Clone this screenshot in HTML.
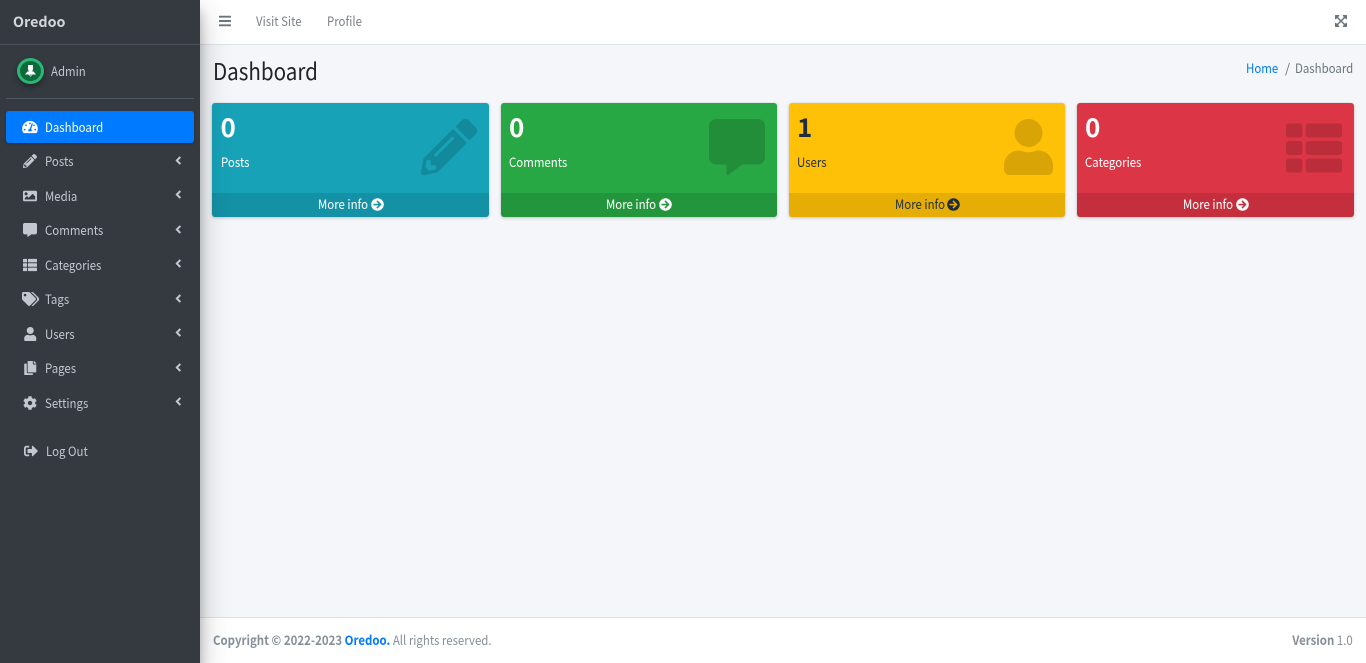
<!DOCTYPE html>
<html lang="en">
<head>
<meta charset="utf-8">
<title>Dashboard</title>
<style>
*{box-sizing:border-box}
html,body{margin:0;padding:0;width:1366px;height:663px;overflow:hidden;background:#f4f6f9}
body{position:relative;font-family:"Noto Sans CJK SC","Liberation Sans",sans-serif;font-size:13px;color:#212529}
a{text-decoration:none;color:inherit}
.t{position:absolute;line-height:20px;height:20px;white-space:nowrap}
.a{position:absolute}
svg{display:block;fill:currentColor}
#side{position:absolute;left:0;top:0;width:200px;height:663px;background:#343a40;color:#c2c7d0;box-shadow:0 14px 28px rgba(0,0,0,.25),0 10px 10px rgba(0,0,0,.22);z-index:5}
#nav{position:absolute;left:200px;top:0;width:1166px;height:45px;background:#fff;border-bottom:1px solid #dee2e6}
#foot{position:absolute;left:200px;top:617px;width:1166px;height:46px;background:#fff;border-top:1px solid #dee2e6;color:#869099}
.card{position:absolute;top:103px;height:114px;border-radius:3px;box-shadow:0 0 1px rgba(0,0,0,.125),0 1px 3px rgba(0,0,0,.2);overflow:hidden;color:#fff}
.card .num{position:absolute;left:8.5px;top:8px;font-size:26px;font-weight:700;line-height:32px}
.card .lab{position:absolute;left:8.5px;top:49px;line-height:20px;transform:scaleX(.88);transform-origin:0 50%;white-space:nowrap}
.card .big{position:absolute;color:rgba(0,0,0,.15)}
.card .more{position:absolute;left:0;right:0;bottom:0;height:24px;background:rgba(0,0,0,.1)}
.card .mt{position:absolute;top:1px;line-height:20px;transform:scaleX(.88);transform-origin:0 50%;white-space:nowrap}
.card .more svg{position:absolute;top:5px;width:13px;height:13px}
.s{transform:scaleX(.88);transform-origin:0 50%}
.r{transform:scaleX(.88);transform-origin:100% 50%}
</style>
</head>
<body>

<svg width="0" height="0" style="position:absolute">
<defs>
<symbol id="i-tach" viewBox="0 0 576 512"><path d="M288 32C128.94 32 0 160.94 0 320c0 52.8 14.25 102.26 39.06 144.8 5.61 9.62 16.3 15.2 27.44 15.2h443c11.14 0 21.83-5.58 27.44-15.2C561.75 422.26 576 372.8 576 320c0-159.06-128.94-288-288-288zm0 64c14.71 0 26.58 10.13 30.32 23.65-1.11 2.26-2.64 4.23-3.45 6.67l-9.22 27.67c-5.13 3.49-10.97 6.01-17.64 6.01-17.67 0-32-14.33-32-32S270.33 96 288 96zM96 384c-17.67 0-32-14.33-32-32s14.33-32 32-32 32 14.33 32 32-14.33 32-32 32zm48-160c-17.67 0-32-14.33-32-32s14.33-32 32-32 32 14.33 32 32-14.33 32-32 32zm246.77-72.41l-61.33 184C343.13 347.33 352 364.54 352 384c0 11.72-3.38 22.55-8.88 32H232.88c-5.5-9.45-8.88-20.28-8.88-32 0-33.94 26.5-61.43 59.9-63.59l61.34-184.01c4.17-12.56 17.73-19.45 30.36-15.17 12.57 4.19 19.35 17.79 15.17 30.36zm14.66 57.2l15.52-46.55c3.47-1.29 7.13-2.23 11.05-2.23 17.67 0 32 14.33 32 32s-14.33 32-32 32c-11.38-.01-20.89-6.28-26.57-15.22zM480 384c-17.67 0-32-14.33-32-32s14.33-32 32-32 32 14.33 32 32-14.33 32-32 32z"/></symbol>
<symbol id="i-pen" viewBox="0 0 512 512"><path d="M497.9 142.1l-46.1 46.1c-4.7 4.7-12.3 4.7-17 0l-111-111c-4.7-4.7-4.7-12.3 0-17l46.1-46.1c18.7-18.7 49.1-18.7 67.9 0l60.1 60.1c18.8 18.7 18.8 49.1 0 67.9zM284.2 99.8L21.6 362.4.4 483.9c-2.9 16.4 11.4 30.6 27.8 27.8l121.5-21.3 262.6-262.6c4.7-4.7 4.7-12.3 0-17l-111-111c-4.8-4.7-12.4-4.7-17.1 0zM124.1 339.9c-5.5-5.5-5.5-14.3 0-19.8l154-154c5.5-5.5 14.3-5.5 19.8 0s5.5 14.3 0 19.8l-154 154c-5.5 5.5-14.3 5.5-19.8 0zM88 424h48v36.3l-64.5 11.3-31.1-31.1L51.7 376H88v48z"/></symbol>
<symbol id="i-img" viewBox="0 0 512 512"><path d="M464 448H48c-26.51 0-48-21.49-48-48V112c0-26.51 21.49-48 48-48h416c26.51 0 48 21.49 48 48v288c0 26.51-21.49 48-48 48zM112 120c-30.928 0-56 25.072-56 56s25.072 56 56 56 56-25.072 56-56-25.072-56-56-56zM64 384h384V272l-87.515-87.515c-4.686-4.686-12.284-4.686-16.971 0L208 320l-55.515-55.515c-4.686-4.686-12.284-4.686-16.971 0L64 336v48z"/></symbol>
<symbol id="i-com" viewBox="0 0 512 512"><path d="M448 0H64C28.7 0 0 28.7 0 64v288c0 35.3 28.7 64 64 64h96v84c0 9.8 11.2 15.5 19.1 9.7L304 416h144c35.3 0 64-28.7 64-64V64c0-35.3-28.7-64-64-64z"/></symbol>
<symbol id="i-list" viewBox="0 0 512 512"><path d="M149.333 216v80c0 13.255-10.745 24-24 24H24c-13.255 0-24-10.745-24-24v-80c0-13.255 10.745-24 24-24h101.333c13.255 0 24 10.745 24 24zM0 376v80c0 13.255 10.745 24 24 24h101.333c13.255 0 24-10.745 24-24v-80c0-13.255-10.745-24-24-24H24c-13.255 0-24 10.745-24 24zM125.333 32H24C10.745 32 0 42.745 0 56v80c0 13.255 10.745 24 24 24h101.333c13.255 0 24-10.745 24-24V56c0-13.255-10.745-24-24-24zm80 448H488c13.255 0 24-10.745 24-24v-80c0-13.255-10.745-24-24-24H205.333c-13.255 0-24 10.745-24 24v80c0 13.255 10.745 24 24 24zm-24-424v80c0 13.255 10.745 24 24 24H488c13.255 0 24-10.745 24-24V56c0-13.255-10.745-24-24-24H205.333c-13.255 0-24 10.745-24 24zm24 264H488c13.255 0 24-10.745 24-24v-80c0-13.255-10.745-24-24-24H205.333c-13.255 0-24 10.745-24 24v80c0 13.255 10.745 24 24 24z"/></symbol>
<symbol id="i-tags" viewBox="0 0 640 512"><path d="M497.941 225.941L286.059 14.059A48 48 0 0 0 252.118 0H48C21.49 0 0 21.49 0 48v204.118a48 48 0 0 0 14.059 33.941l211.882 211.882c18.744 18.745 49.136 18.746 67.882 0l204.118-204.118c18.745-18.745 18.745-49.137 0-67.882zM112 160c-26.51 0-48-21.49-48-48s21.49-48 48-48 48 21.49 48 48-21.49 48-48 48zm513.941 133.823L421.823 497.941c-18.745 18.745-49.137 18.745-67.882 0l-.36-.36L527.64 323.522c16.999-16.999 26.36-39.6 26.36-63.64s-9.362-46.641-26.36-63.64L331.397 0h48.721a48 48 0 0 1 33.941 14.059l211.882 211.882c18.745 18.745 18.745 49.137 0 67.882z"/></symbol>
<symbol id="i-user" viewBox="0 0 448 512"><path d="M224 256c70.7 0 128-57.3 128-128S294.7 0 224 0 96 57.3 96 128s57.3 128 128 128zm89.6 32h-16.7c-22.2 10.2-46.9 16-72.9 16s-50.6-5.8-72.9-16h-16.7C60.2 288 0 348.2 0 422.4V464c0 26.5 21.5 48 48 48h352c26.5 0 48-21.5 48-48v-41.6c0-74.2-60.2-134.4-134.4-134.4z"/></symbol>
<symbol id="i-copy" viewBox="0 0 448 512"><path d="M320 448v40c0 13.255-10.745 24-24 24H24c-13.255 0-24-10.745-24-24V120c0-13.255 10.745-24 24-24h72v296c0 30.879 25.121 56 56 56h168zm0-344V0H152c-13.255 0-24 10.745-24 24v368c0 13.255 10.745 24 24 24h272c13.255 0 24-10.745 24-24V128H344c-13.2 0-24-10.8-24-24zm120.971-31.029L375.029 7.029A24 24 0 0 0 358.059 0H352v96h96v-6.059a24 24 0 0 0-7.029-16.97z"/></symbol>
<symbol id="i-cog" viewBox="0 0 512 512"><path d="M487.4 315.7l-42.6-24.6c4.3-23.2 4.3-47 0-70.2l42.6-24.6c4.9-2.8 7.1-8.6 5.5-14-11.1-35.6-30-67.8-54.7-94.6-3.8-4.1-10-5.1-14.8-2.3L380.8 110c-17.9-15.4-38.5-27.3-60.8-35.1V25.8c0-5.6-3.9-10.5-9.4-11.7-36.7-8.2-74.3-7.8-109.2 0-5.5 1.2-9.4 6.1-9.4 11.7V75c-22.2 7.9-42.8 19.8-60.8 35.1L88.7 85.5c-4.9-2.8-11-1.9-14.8 2.3-24.7 26.7-43.6 58.9-54.7 94.6-1.7 5.4.6 11.2 5.5 14L67.3 221c-4.3 23.2-4.3 47 0 70.2l-42.6 24.6c-4.9 2.8-7.1 8.6-5.5 14 11.1 35.6 30 67.8 54.7 94.6 3.8 4.1 10 5.1 14.8 2.3l42.6-24.6c17.9 15.4 38.5 27.3 60.8 35.1v49.2c0 5.6 3.9 10.5 9.4 11.7 36.7 8.2 74.3 7.8 109.2 0 5.5-1.2 9.4-6.1 9.4-11.7v-49.2c22.2-7.9 42.8-19.8 60.8-35.1l42.6 24.6c4.9 2.8 11 1.9 14.8-2.3 24.7-26.7 43.6-58.9 54.7-94.6 1.5-5.5-.7-11.3-5.6-14.1zM256 336c-44.1 0-80-35.9-80-80s35.9-80 80-80 80 35.9 80 80-35.9 80-80 80z"/></symbol>
<symbol id="i-out" viewBox="0 0 512 512"><path d="M497 273L329 441c-15 15-41 4.5-41-17v-96H152c-13.3 0-24-10.7-24-24v-96c0-13.3 10.7-24 24-24h136V88c0-21.4 25.9-32 41-17l168 168c9.3 9.4 9.3 24.6 0 34zM192 436v-40c0-6.6-5.4-12-12-12H96c-17.7 0-32-14.3-32-32V160c0-17.7 14.3-32 32-32h84c6.6 0 12-5.4 12-12V76c0-6.6-5.4-12-12-12H96c-53 0-96 43-96 96v192c0 53 43 96 96 96h84c6.6 0 12-5.4 12-12z"/></symbol>
<symbol id="i-left" viewBox="0 0 256 512"><path d="M31.7 239l136-136c9.4-9.4 24.6-9.4 33.9 0l22.6 22.6c9.4 9.4 9.4 24.6 0 33.9L127.9 256l96.4 96.4c9.4 9.4 9.4 24.6 0 33.9L201.7 409c-9.4 9.4-24.6 9.4-33.9 0l-136-136c-9.5-9.4-9.5-24.6-.1-34z"/></symbol>
<symbol id="i-arrow" viewBox="0 0 512 512"><path d="M256 8c137 0 248 111 248 248S393 504 256 504 8 393 8 256 119 8 256 8zm-28.9 143.6l75.5 72.4H120c-13.3 0-24 10.7-24 24v16c0 13.3 10.7 24 24 24h182.6l-75.5 72.4c-9.7 9.3-9.9 24.8-.4 34.3l11 10.9c9.4 9.4 24.6 9.4 33.9 0L404.3 273c9.4-9.4 9.4-24.6 0-33.9L271.6 106.3c-9.4-9.4-24.6-9.4-33.9 0l-11 10.9c-9.5 9.6-9.3 25.1.4 34.4z"/></symbol>
<symbol id="i-bars" viewBox="0 0 448 512"><path d="M16 132h416c8.837 0 16-7.163 16-16V76c0-8.837-7.163-16-16-16H16C7.163 60 0 67.163 0 76v40c0 8.837 7.163 16 16 16zm0 160h416c8.837 0 16-7.163 16-16v-40c0-8.837-7.163-16-16-16H16c-8.837 0-16 7.163-16 16v40c0 8.837 7.163 16 16 16zm0 160h416c8.837 0 16-7.163 16-16v-40c0-8.837-7.163-16-16-16H16c-8.837 0-16 7.163-16 16v40c0 8.837 7.163 16 16 16z"/></symbol>
<symbol id="i-exp" viewBox="0 0 448 512"><path d="M448 344v112a23.94 23.94 0 0 1-24 24H312c-21.39 0-32.09-25.9-17-41l36.2-36.2L224 295.6 116.77 402.9 153 439c15.09 15.1 4.39 41-17 41H24a23.94 23.94 0 0 1-24-24V344c0-21.4 25.89-32.1 41-17l36.19 36.2L184.46 256 77.18 148.7 41 185c-15.1 15.1-41 4.4-41-17V56a23.94 23.94 0 0 1 24-24h112c21.39 0 32.09 25.9 17 41l-36.2 36.2L224 216.4l107.23-107.3L295 73c-15.09-15.1-4.39-41 17-41h112a23.94 23.94 0 0 1 24 24v112c0 21.4-25.89 32.1-41 17l-36.19-36.2L263.54 256l107.28 107.3L407 327.1c15.1-15.2 41-4.5 41 16.9z"/></symbol>
</defs>
</svg>

<div id="nav">
  <svg class="a" style="left:19px;top:14px;width:12px;height:14px;color:#6c757d" viewBox="0 0 448 512"><use href="#i-bars"/></svg>
  <a class="t s" style="left:55.5px;top:11px;color:#7b8288">Visit Site</a>
  <a class="t s" style="left:127px;top:11px;color:#7b8288">Profile</a>
  <svg class="a" style="left:1135px;top:14px;width:12px;height:14px;color:#6c757d" viewBox="0 0 448 512"><use href="#i-exp"/></svg>
</div>

<div class="t s" style="left:212.5px;top:55px;height:30px;line-height:30px;font-size:23.4px;color:#212529">Dashboard</div>
<a class="t s" style="left:1246px;top:58px;color:#007bff">Home</a>
<div class="t" style="left:1285px;top:58px;color:#6c757d">/</div>
<div class="t s" style="left:1295px;top:58px;color:#6c757d">Dashboard</div>

<div class="card" style="left:212px;width:277px;background:#17a2b8">
  <div class="num">0</div><div class="lab">Posts</div>
  <svg class="big" style="left:208.5px;top:16px;width:56px;height:56px" viewBox="0 0 512 512"><use href="#i-pen"/></svg>
  <a class="more"><span class="mt" style="left:106px">More info</span><svg style="left:158.5px" viewBox="0 0 512 512"><use href="#i-arrow"/></svg></a>
</div>
<div class="card" style="left:501px;width:276px;background:#28a745">
  <div class="num" style="left:8px">0</div><div class="lab" style="left:8px">Comments</div>
  <svg class="big" style="left:208px;top:16px;width:56px;height:56px" viewBox="0 0 512 512"><use href="#i-com"/></svg>
  <a class="more"><span class="mt" style="left:105px">More info</span><svg style="left:158px" viewBox="0 0 512 512"><use href="#i-arrow"/></svg></a>
</div>
<div class="card" style="left:789px;width:276px;background:#ffc107;color:#1f2d3d">
  <div class="num" style="left:8px">1</div><div class="lab" style="left:8px">Users</div>
  <svg class="big" style="left:215px;top:16px;width:49px;height:56px" viewBox="0 0 448 512"><use href="#i-user"/></svg>
  <a class="more"><span class="mt" style="left:106px">More info</span><svg style="left:158px" viewBox="0 0 512 512"><use href="#i-arrow"/></svg></a>
</div>
<div class="card" style="left:1077px;width:277px;background:#dc3545">
  <div class="num" style="left:8px">0</div><div class="lab" style="left:8px">Categories</div>
  <svg class="big" style="left:208.5px;top:16.5px;width:56px;height:56px" viewBox="0 0 512 512"><use href="#i-list"/></svg>
  <a class="more"><span class="mt" style="left:106px">More info</span><svg style="left:158.5px" viewBox="0 0 512 512"><use href="#i-arrow"/></svg></a>
</div>

<div id="foot">
  <div class="t s" style="left:13px;top:12px"><b style="font-weight:700">Copyright © 2022-2023 <a style="color:#007bff">Oredoo.</a></b> All rights reserved.</div>
  <div class="t r" style="right:13px;top:12px"><b style="font-weight:700">Version</b> 1.0</div>
</div>

<div id="side">
  <div class="t" style="left:13px;top:12px;font-weight:700;font-size:14.3px;color:#d3d6da">Oredoo</div>
  <div class="a" style="left:0;top:44px;width:200px;height:1px;background:#4b545c"></div>

  <div class="a" style="left:17px;top:58px;width:27px;height:26px;border-radius:50%;background:#0e6a3c;border:3px solid #2bb673;box-shadow:0 3px 6px rgba(0,0,0,.35)"></div>
  <svg class="a" style="left:24px;top:64px;width:13px;height:14px" viewBox="0 0 13 14"><path fill="#fff" d="M4 1h5v4L8.200 7.500h1.300L12 10.500H8.500L6.500 13 4.500 10.500H1L3.500 7.500h1.300L4 5z"/><path fill="#35c27c" d="M5 10.500h3L6.500 12.800z"/></svg>
  <div class="t s" style="left:51px;top:61px;color:#c2c7d0">Admin</div>
  <div class="a" style="left:6px;top:98px;width:188px;height:1px;background:#4f5962"></div>

  <div class="a" style="left:6px;top:111px;width:188px;height:32px;background:#007bff;border-radius:3px;box-shadow:0 1px 3px rgba(0,0,0,.2)"></div>
  <svg class="a" style="left:22px;top:120px;width:16px;height:14px;color:#fff" viewBox="0 0 576 512"><use href="#i-tach"/></svg>
  <div class="t s" style="left:45px;top:117px;color:#fff">Dashboard</div>

  <svg class="a" style="left:23px;top:154px;width:14px;height:14px" viewBox="0 0 512 512"><use href="#i-pen"/></svg>
  <div class="t s" style="left:45px;top:151px">Posts</div>
  <svg class="a" style="left:174.500px;top:154px;width:6.500px;height:13px" viewBox="0 0 256 512"><use href="#i-left"/></svg>

  <svg class="a" style="left:23px;top:189px;width:14px;height:14px" viewBox="0 0 512 512"><use href="#i-img"/></svg>
  <div class="t s" style="left:45px;top:186px">Media</div>
  <svg class="a" style="left:174.500px;top:188px;width:6.500px;height:13px" viewBox="0 0 256 512"><use href="#i-left"/></svg>

  <svg class="a" style="left:23px;top:223px;width:14px;height:14px" viewBox="0 0 512 512"><use href="#i-com"/></svg>
  <div class="t s" style="left:45px;top:220px">Comments</div>
  <svg class="a" style="left:174.500px;top:223px;width:6.500px;height:13px" viewBox="0 0 256 512"><use href="#i-left"/></svg>

  <svg class="a" style="left:23px;top:258px;width:14px;height:14px" viewBox="0 0 512 512"><use href="#i-list"/></svg>
  <div class="t s" style="left:45px;top:255px">Categories</div>
  <svg class="a" style="left:174.500px;top:257px;width:6.500px;height:13px" viewBox="0 0 256 512"><use href="#i-left"/></svg>

  <svg class="a" style="left:21.500px;top:292px;width:17.500px;height:14px" viewBox="0 0 640 512"><use href="#i-tags"/></svg>
  <div class="t s" style="left:45px;top:289px">Tags</div>
  <svg class="a" style="left:174.500px;top:292px;width:6.500px;height:13px" viewBox="0 0 256 512"><use href="#i-left"/></svg>

  <svg class="a" style="left:24px;top:327px;width:12.500px;height:14px" viewBox="0 0 448 512"><use href="#i-user"/></svg>
  <div class="t s" style="left:45px;top:324px">Users</div>
  <svg class="a" style="left:174.500px;top:326px;width:6.500px;height:13px" viewBox="0 0 256 512"><use href="#i-left"/></svg>

  <svg class="a" style="left:24px;top:361px;width:12.500px;height:14px" viewBox="0 0 448 512"><use href="#i-copy"/></svg>
  <div class="t s" style="left:45px;top:358px">Pages</div>
  <svg class="a" style="left:174.500px;top:361px;width:6.500px;height:13px" viewBox="0 0 256 512"><use href="#i-left"/></svg>

  <svg class="a" style="left:23px;top:396px;width:14px;height:14px" viewBox="0 0 512 512"><use href="#i-cog"/></svg>
  <div class="t s" style="left:45px;top:393px">Settings</div>
  <svg class="a" style="left:174.500px;top:395px;width:6.500px;height:13px" viewBox="0 0 256 512"><use href="#i-left"/></svg>

  <svg class="a" style="left:24px;top:444px;width:14px;height:14px" viewBox="0 0 512 512"><use href="#i-out"/></svg>
  <div class="t s" style="left:46px;top:441px">Log Out</div>
</div>

</body>
</html>
